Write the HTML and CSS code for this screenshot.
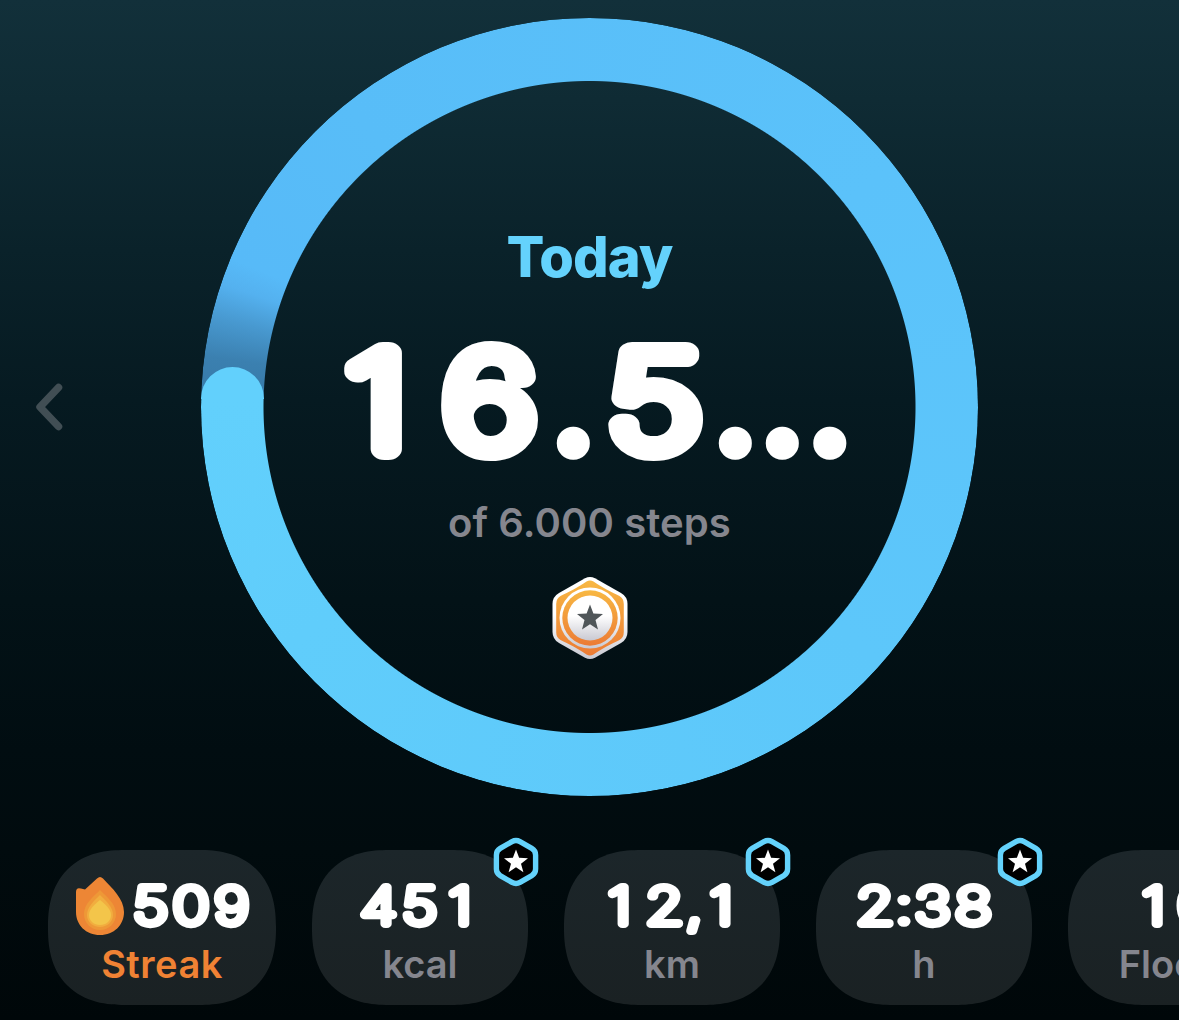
FILE: index.html
```html
<!DOCTYPE html>
<html lang="en">
<head>
<meta charset="utf-8">
<title>Steps</title>
<link rel="stylesheet" href="styles.css">
</head>
<body>
<svg class="defs" width="0" height="0" aria-hidden="true">
  <defs>
    <symbol id="badge" viewBox="0 0 46 50">
      <path d="M19 4.6Q23 2.4 27 4.6L38.8 11.3Q42.6 13.5 42.6 17.9V32.1Q42.6 36.5 38.8 38.7L27 45.4Q23 47.6 19 45.4L7.2 38.7Q3.4 36.5 3.4 32.1V17.9Q3.4 13.5 7.2 11.3Z" fill="#000" stroke="#64d2fb" stroke-width="5.4"/>
      <path d="M23 12.500 26.100 20.800 35 21.200 28 26.700 30.400 35.200 23 30.300 15.600 35.200 18 26.700 11 21.200 19.900 20.800Z" fill="#fff"/>
    </symbol>
  </defs>
</svg>
<main class="screen">
  <section class="day">
    <button class="prev" aria-label="Previous day">
      <svg width="30" height="50" viewBox="0 0 30 50"><path d="M24.500 5.500 6 25 24.500 44.500" fill="none" stroke="#414e54" stroke-width="7.500" stroke-linecap="round" stroke-linejoin="round"/></svg>
    </button>
    <div class="ring">
      <div class="ring-track"></div>
      <div class="ring-head"></div>
      <div class="summary">
        <h1 class="title">Today</h1>
        <svg class="count" width="540" height="150" viewBox="320 325 540 150">
          <text class="rounded count-text" transform="scale(1.25 1)" y="449" x="277 354.500">16</text>
          <text class="rounded count-dots" y="449.300" x="555.300">.</text>
          <text class="rounded count-text" transform="scale(1.25 1)" y="449" x="486.700">5</text>
          <text class="rounded count-dots" y="449.300" x="717.300 764.300 811.800">...</text>
        </svg>
        <p class="goal">of 6.000 steps</p>
        <svg class="medal" width="76" height="84" viewBox="0 0 76 84">
          <defs>
            <linearGradient id="silver" x2="0" y2="1"><stop offset=".45" stop-color="#fff"/><stop offset="1" stop-color="#c9c9d2"/></linearGradient>
            <linearGradient id="gold" x2="0" y2="1"><stop offset="0" stop-color="#f8b843"/><stop offset="1" stop-color="#ec7b34"/></linearGradient>
          </defs>
          <path d="M33 2.300Q38 -.5 43 2.300L69 17Q75.500 20.700 75.500 28V56Q75.500 63.300 69 67L43 81.700Q38 84.500 33 81.700L7 67Q.5 63.300 .5 56V28Q.5 20.700 7 17Z" fill="url(#silver)"/>
          <path d="M34.500 5.500Q38 3.500 41.500 5.500C49 11 60 16.500 67.500 20Q71.800 22.500 71.800 28V56Q71.800 61.500 67.500 64C60 67.500 49 73 41.500 78.500Q38 80.500 34.500 78.500C27 73 16 67.500 8.500 64Q4.200 61.500 4.200 56V28Q4.200 22.500 8.500 20C16 16.500 27 11 34.500 5.500Z" fill="url(#gold)"/>
          <circle cx="38" cy="42" r="30.500" fill="url(#silver)"/>
          <circle cx="38" cy="42" r="27.700" fill="url(#gold)"/>
          <circle cx="38" cy="42" r="22.500" fill="url(#silver)"/>
          <path d="M38 28.500 41.400 37.600 51 38 43.500 44 46 53.500 38 48.200 30 53.500 32.500 44 25 38 34.600 37.600Z" fill="#505659"/>
        </svg>
      </div>
    </div>
  </section>
  <section class="stats">
    <article class="card streak">
      <svg class="flame" width="48" height="58" viewBox="0 0 48 58">
        <path d="M0 15Q0 10 5 11.500L9 12.500 21 1.500Q24 -1.500 27 1.500C36 11 48 22 48 35C48 48 38 58 24 58S0 48 0 35Z" fill="#ed8635"/>
        <path d="M24 13C17 20 8 27 8 37C8 46 15 53 24 53S40 46 40 37C40 27 31 20 24 13Z" fill="#ee9837"/>
        <path d="M24 18C18 24 11 30 11 38C11 45 17 50 24 50S37 45 37 38C37 30 30 24 24 18Z" fill="#f1ad3f"/>
        <path d="M24 23C19 27 13 32 13 38C13 44 18 48 24 48S35 44 35 38C35 32 29 27 24 23Z" fill="#f3c54a"/>
      </svg>
      <svg class="value" width="228" height="70" viewBox="0 0 228 70"><text class="rounded value-text" transform="scale(1.22 1)" y="52.700" x="69.800 102.200 136.200">509</text></svg>
      <p class="unit">Streak</p>
    </article>
    <article class="card">
      <svg class="badge" width="46" height="50"><use href="#badge"/></svg>
      <svg class="value" width="216" height="70" viewBox="0 0 216 70"><text class="rounded value-text" transform="scale(1.22 1)" y="52.700" x="39.500 73.900 112">451</text></svg>
      <p class="unit">kcal</p>
    </article>
    <article class="card">
      <svg class="badge" width="46" height="50"><use href="#badge"/></svg>
      <svg class="value" width="216" height="70" viewBox="0 0 216 70"><text class="rounded value-text" transform="scale(1.22 1)" y="52.700" x="36.300 66.900 100.100 119.700">12,1</text></svg>
      <p class="unit">km</p>
    </article>
    <article class="card">
      <svg class="badge" width="46" height="50"><use href="#badge"/></svg>
      <svg class="value" width="216" height="70" viewBox="0 0 216 70"><text class="rounded value-text" transform="scale(1.22 1)" y="52.700" x="32.800 65 81 114">2<tspan class="colon">:</tspan>38</text></svg>
      <p class="unit">h</p>
    </article>
    <article class="card">
      <svg class="value" width="216" height="70" viewBox="0 0 216 70"><text class="rounded value-text" transform="scale(1.22 1)" y="52.700" x="60.800 89.400">10</text></svg>
      <p class="unit">Floors</p>
    </article>
  </section>
</main>
</body>
</html>
```

FILE: styles.css
```css
* { box-sizing: border-box; }

body {
  margin: 0;
  font-family: Inter, "Liberation Sans", sans-serif;
  background: #00090c;
}

.defs { position: absolute; }

.screen {
  width: 1179px;
  height: 1020px;
  padding-top: 18px;
  overflow: hidden;
  background: linear-gradient(#12303a 0, #0f2b34 100px, #0a222a 250px, #061a21 400px, #031217 600px, #010d11 750px, #010b0e 850px, #000709 1020px);
}

.day {
  display: flex;
  align-items: center;
  height: 778px;
  padding-left: 34px;
}

.prev {
  display: block;
  width: 30px;
  height: 50px;
  padding: 0;
  border: 0;
  background: none;
}

.prev svg { display: block; }

.ring {
  position: relative;
  flex: none;
  width: 777px;
  height: 778px;
  margin-left: 137px;
}

.ring-track {
  position: absolute;
  inset: 0;
  border-radius: 50%;
  background: conic-gradient(from 271.500deg, #377aa8 0deg, #3b80b0 6deg, #4899d0 12deg, #54b1ef 17deg, #57baf8 21deg, #58bdf8 50deg, #5bc2fa 140deg, #5dc7fa 220deg, #60cdfb 320deg, #62d0fc 360deg);
  mask: radial-gradient(circle closest-side, transparent 325.500px, #000 326.500px);
}

.ring-head {
  position: absolute;
  left: -0.5px;
  top: 349px;
  width: 63.5px;
  height: 32px;
  border-radius: 32px 32px 0 0;
  background: #62d0fc;
}

.summary {
  position: relative;
  display: flex;
  flex-direction: column;
  align-items: center;
  padding-top: 204px;
}

.title {
  margin: 0;
  height: 70px;
  font-size: 56px;
  line-height: 70px;
  font-weight: 800;
  letter-spacing: -0.9px;
  color: #64d2fc;
}

.count { display: block; margin: 33px 0 0 1px; }

.rounded {
  font-family: Inter, "Liberation Sans", sans-serif;
  font-weight: 100;
  fill: #fff;
  stroke: #fff;
  stroke-linejoin: round;
}

.count-text { font-size: 132px; stroke-width: 22px; }

.count-dots { font-size: 128px; font-weight: 300; stroke-width: 19.5px; }

.colon { font-weight: 300; stroke-width: 5.5px; }

.goal {
  margin: 23px 0 0;
  height: 50px;
  font-size: 40px;
  line-height: 50px;
  font-weight: 600;
  letter-spacing: 0.1px;
  color: #85868e;
}

.medal { display: block; margin-top: 28px; }

.stats {
  display: flex;
  gap: 36px;
  margin: 54px 0 0 48px;
}

.card {
  position: relative;
  flex: none;
  width: 216px;
  height: 155px;
  padding-top: 21px;
  border-radius: 66px;
  background: linear-gradient(#1c262a, #1a2123);
  text-align: center;
}

@supports (corner-shape: squircle) {
  .card { border-radius: 77px; corner-shape: superellipse(1.25); }
}

.streak { width: 228px; }

.value { display: block; }

.value-text { font-size: 50.5px; stroke-width: 8px; }

.unit {
  margin: 0;
  font-size: 38px;
  line-height: 46px;
  font-weight: 600;
  color: #85868e;
}

.streak .unit { color: #f08234; letter-spacing: 0.5px; }

.flame {
  position: absolute;
  left: 28px;
  top: 27px;
}

.badge {
  position: absolute;
  right: -11px;
  top: -13px;
}
```
